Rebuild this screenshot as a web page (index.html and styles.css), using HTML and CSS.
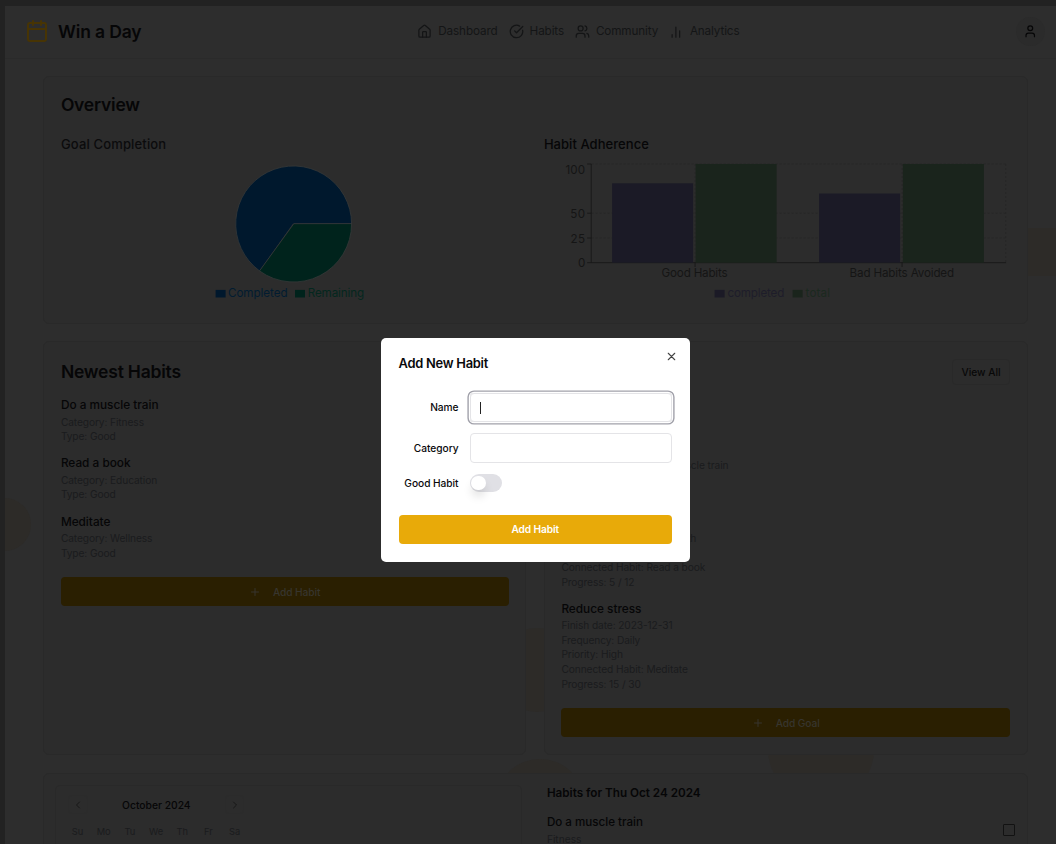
FILE: index.html
```html
<!DOCTYPE html>
<html lang="en">
<head>
<meta charset="utf-8">
<title>Win a Day</title>
<link rel="stylesheet" href="styles.css">
</head>
<body>
<div class="page">
  <div class="bubbles">
    <i class="bubble b1"></i><i class="bubble b2"></i><i class="bubble b3"></i><i class="bubble b4"></i><i class="bubble b5"></i><i class="bubble b6"></i><i class="bubble b7"></i>
  </div>
  <header class="topbar">
    <div class="brand">
      <svg class="logo" viewBox="0 0 24 24"><path d="M8 2v4M16 2v4M3 10h18"/><rect x="3" y="4" width="18" height="18" rx="2"/></svg>
      <span class="brand-name">Win a Day</span>
    </div>
    <nav class="nav">
      <a class="n1"><svg viewBox="0 0 24 24"><path d="M15 21v-8a1 1 0 0 0-1-1h-4a1 1 0 0 0-1 1v8"/><path d="M3 10a2 2 0 0 1 .709-1.528l7-5.999a2 2 0 0 1 2.582 0l7 5.999A2 2 0 0 1 21 10v9a2 2 0 0 1-2 2H5a2 2 0 0 1-2-2z"/></svg><span>Dashboard</span></a>
      <a class="n2"><svg viewBox="0 0 24 24"><path d="M21.801 10A10 10 0 1 1 17 3.335"/><path d="m9 11 3 3L22 4"/></svg><span>Habits</span></a>
      <a class="n3"><svg viewBox="0 0 24 24"><path d="M16 21v-2a4 4 0 0 0-4-4H6a4 4 0 0 0-4 4v2"/><circle cx="9" cy="7" r="4"/><path d="M22 21v-2a4 4 0 0 0-3-3.87M16 3.13a4 4 0 0 1 0 7.75"/></svg><span>Community</span></a>
      <a class="n4"><svg viewBox="0 0 24 24"><path d="M12 20V4M18 20V10M6 20v-4" transform="translate(-1 1)"/></svg><span>Analytics</span></a>
    </nav>
    <div class="avatar"><svg viewBox="0 0 24 24"><path d="M19 21v-2a4 4 0 0 0-4-4H9a4 4 0 0 0-4 4v2"/><circle cx="12" cy="7" r="4"/></svg></div>
  </header>
  <main class="content">
    <section class="card overview">
      <h2>Overview</h2>
      <div class="charts">
        <div>
          <h3 class="goal-h">Goal Completion</h3>
          <svg class="chart" viewBox="0 0 466 145.5">
            <g stroke="#363838" stroke-width=".8">
              <path fill="#00182d" d="M232.6 64H290.6A58 58 0 1 0 198.5 110.9Z"/>
              <path fill="#00231c" d="M232.6 64L198.5 110.9A58 58 0 0 0 290.6 64Z"/>
            </g>
            <rect x="154.6" y="129.9" width="10" height="7.6" fill="#00182d"/>
            <text x="167" y="136.7" textLength="59.5" fill="#021c31">Completed</text>
            <rect x="234" y="129.9" width="10" height="7.6" fill="#00231c"/>
            <text x="246.7" y="136.7" textLength="56.5" fill="#04271e">Remaining</text>
          </svg>
        </div>
        <div>
          <h3 class="adh-h">Habit Adherence</h3>
          <svg class="chart" viewBox="0 0 466 145.5">
            <g transform="translate(-.4 .5)">
            <path class="grid" d="M48 3.5H462.5M48 52.7H462.5M48 77.5H462.5M151.5 3.5V102M358.5 3.5V102M462 3.5V102"/>
            <path class="axis" d="M47.6 3.5V102.2M43.5 3.5H47.6M43.5 52.7H47.6M43.5 77.5H47.6M43.5 102.2H462.5M151.5 102V106.5M358.5 102V106.5"/>
            <rect x="68.5" y="22.8" width="81" height="79.4" fill="#1b1a26"/><rect x="152" y="3.5" width="81" height="98.7" fill="#1a241c"/>
            <rect x="275.5" y="33" width="81" height="69.2" fill="#1b1a26"/><rect x="359.3" y="3.5" width="81" height="98.7" fill="#1a241c"/>
            <g fill="#151515">
              <text x="22" y="13.6" textLength="19.5">100</text><text x="26.7" y="57.4" textLength="14.8">50</text><text x="27" y="82.2" textLength="14.5">25</text><text x="34.3" y="106.9" textLength="7.2">0</text>
              <text x="118" y="116.8" textLength="66">Good Habits</text><text x="306" y="116.8" textLength="104.5">Bad Habits Avoided</text>
            </g>
            <rect x="171" y="129.4" width="10" height="7.6" fill="#1b1a26"/><text x="184" y="136.3" textLength="56.7" fill="#1e1d2a">completed</text>
            <rect x="249" y="129.4" width="10" height="7.6" fill="#1a241c"/><text x="262" y="136.3" textLength="24.5" fill="#1b291f">total</text>
            </g>
          </svg>
        </div>
      </div>
    </section>
    <div class="row">
      <section class="card">
        <div class="card-head"><h2 class="newest">Newest Habits</h2></div>
        <ul class="items">
          <li><h4>Do a muscle train</h4><p>Category: Fitness</p><p>Type: Good</p></li>
          <li><h4>Read a book</h4><p>Category: Education</p><p>Type: Good</p></li>
          <li><h4>Meditate</h4><p>Category: Wellness</p><p>Type: Good</p></li>
        </ul>
        <button class="add dim"><svg viewBox="0 0 24 24"><path d="M5 12h14M12 5v14"/></svg>Add Habit</button>
      </section>
      <section class="card">
        <div class="card-head"><h2 class="newest">Newest Goals</h2><button class="view">View All</button></div>
        <ul class="items">
          <li><h4>Get stronger</h4><p>Finish date: 2023-12-31</p><p>Frequency: Daily</p><p>Priority: High</p><p>Connected Habit: Do a muscle train</p><p>Progress: 10 / 30</p></li>
          <li><h4>Read more</h4><p>Finish date: 2023-12-31</p><p>Frequency: Twice per month</p><p>Priority: Medium</p><p>Connected Habit: Read a book</p><p>Progress: 5 / 12</p></li>
          <li><h4>Reduce stress</h4><p>Finish date: 2023-12-31</p><p>Frequency: Daily</p><p>Priority: High</p><p>Connected Habit: Meditate</p><p>Progress: 15 / 30</p></li>
        </ul>
        <button class="add dim"><svg viewBox="0 0 24 24"><path d="M5 12h14M12 5v14"/></svg>Add Goal</button>
      </section>
    </div>
    <section class="card planner">
      <div class="calendar">
        <div class="month"><span class="arrow"><svg viewBox="0 0 24 24"><path d="m15 18-6-6 6-6"/></svg></span><b>October 2024</b><span class="arrow"><svg viewBox="0 0 24 24"><path d="m9 18 6-6-6-6"/></svg></span></div>
        <div class="days"><span>Su</span><span>Mo</span><span>Tu</span><span>We</span><span>Th</span><span>Fr</span><span>Sa</span></div>
      </div>
      <div class="today">
        <h4>Habits for Thu Oct 24 2024</h4>
        <div class="task"><div><h5>Do a muscle train</h5><p>Fitness</p></div><i class="check"></i></div>
      </div>
    </section>
  </main>
</div>
<div class="modal" role="dialog">
  <svg class="close" viewBox="0 0 24 24"><path d="M18 6 6 18M6 6l12 12"/></svg>
  <h1>Add New Habit</h1>
  <div class="form">
    <label>Name</label><div class="input focus"><i class="caret"></i></div>
    <label>Category</label><div class="input"></div>
    <label>Good Habit</label><div class="switch"><i></i></div>
  </div>
  <button class="add">Add Habit</button>
</div>
</body>
</html>
```
FILE: styles.css
```css
* { box-sizing: border-box; margin: 0; padding: 0; }
body { width: 1056px; height: 844px; overflow: hidden; background: #222; padding: 6px 0 0 5px; font-family: Inter, "Open Sans", sans-serif; color: #060607; }
svg { fill: none; stroke: currentColor; stroke-width: 2; stroke-linecap: round; stroke-linejoin: round; flex: none; }
button { font: inherit; border: 0; }
ul { list-style: none; }
.page { position: relative; height: 838px; background: #2d2d2d; overflow: hidden; }
.bubbles { position: absolute; inset: 0; }
.bubble { position: absolute; border-radius: 50%; background: #2d2b28; }
.b1 { left: -27px; top: 492px; width: 53px; height: 53px; }
.b2 { left: 120px; top: 410px; width: 95px; height: 104px; }
.b3 { left: 995px; top: 222px; width: 90px; height: 48px; border-radius: 0; }
.b4 { left: 490px; top: 622px; width: 84px; height: 84px; }
.b5 { left: 491px; top: 753px; width: 88px; height: 88px; }
.b6 { left: 763px; top: 690px; width: 106px; height: 106px; }
.b7 { left: 794px; top: 490px; width: 90px; height: 90px; }
.topbar { position: relative; height: 52.5px; border-bottom: 1px solid #2a2a2a; display: flex; align-items: center; padding: 0 11px 1px 20px; }
.brand { display: flex; align-items: center; gap: 9px; width: 392.3px; }
.logo { width: 24px; height: 24px; color: #473404; }
.brand-name { font-size: 17.5px; font-weight: 600; letter-spacing: -.13px; }
.nav { display: flex; flex: 1; font-size: 11.7px; letter-spacing: -.12px; color: #141516; }
.nav a { display: flex; align-items: center; gap: 6px; }
.nav svg { width: 15px; height: 15px; }
.n1 { width: 91.3px; } .n2 { width: 66.3px; } .n3 { width: 94px; }
.avatar { width: 29px; height: 29px; border-radius: 50%; background: #2b2b2b; display: grid; place-items: center; }
.avatar svg { width: 14.5px; height: 14.5px; }
.content { position: relative; padding: 17.1px 28px 0 38.2px; display: flex; flex-direction: column; gap: 17.45px; }
.card { border: 1px solid #292929; border-radius: 6px; background: rgba(45,45,45,.87); padding: 16.7px; }
.overview { height: 248.3px; }
h2 { font-size: 17.5px; line-height: 23.3px; font-weight: 600; letter-spacing: -.2px; }
.charts { display: grid; grid-template-columns: 466px 466px; gap: 17px; margin-top: 17.45px; }
h3 { font-size: 13px; line-height: 20.4px; font-weight: 500; margin-bottom: 5.8px; }
.goal-h { letter-spacing: .16px; color: #0b0b0c; }
.adh-h { letter-spacing: .05px; }
.chart { display: block; width: 466px; height: 145.5px; overflow: visible; stroke: none; font-size: 11.64px; }
.grid { stroke: #262626; stroke-width: .8; stroke-dasharray: 2 2; stroke-linecap: butt; }
.axis { stroke: #151515; stroke-width: .8; stroke-linecap: butt; }
.row { display: grid; grid-template-columns: 483px 484px; gap: 17.5px; height: 414px; }
.card-head { display: flex; justify-content: space-between; align-items: center; height: 26.2px; margin-bottom: 12.1px; }
.view { width: 58px; height: 26.2px; border: 1px solid #292929; border-radius: 4px; background: none; font-size: 10.2px; font-weight: 500; color: #080808; }
.items { display: flex; flex-direction: column; gap: 11.64px; margin-bottom: 16.9px; }
.items h4 { font-size: 11.8px; line-height: 17.45px; font-weight: 500; }
.items p { font-size: 10.2px; line-height: 14.55px; letter-spacing: -.1px; color: #1a1b1d; white-space: nowrap; }
.add { display: flex; align-items: center; justify-content: center; width: 100%; height: 29.1px; border-radius: 4px; background: #e8aa09; color: #fff; font-size: 10.2px; font-weight: 600; letter-spacing: -.1px; }
.dim { background: #2a1f01; color: #37352e; font-weight: 500; }
.dim svg { width: 12px; height: 12px; margin-right: 12px; }
.planner { height: 150px; padding: 11.2px; display: grid; grid-template-columns: 467px 1fr; gap: 24.5px; }
.calendar { border: 1px solid #292929; border-radius: 5px; padding: 9px 12px; height: 150px; }
.month { display: flex; justify-content: space-between; align-items: center; width: 176px; height: 19.5px; }
.month b { font-size: 10.3px; font-weight: 500; }
.arrow { width: 19.5px; height: 19.5px; border: 1px solid #2b2b2b; border-radius: 4px; display: grid; place-items: center; color: #171717; }
.arrow svg { width: 12px; height: 12px; }
.days { display: grid; grid-template-columns: repeat(7, 26.2px); margin-top: 10.5px; margin-left: -4px; font-size: 9.3px; line-height: 13px; color: #1a1b1d; text-align: center; }
.today { padding-right: .5px; }
.today h4 { font-size: 11.7px; line-height: 17.5px; font-weight: 600; margin-top: .4px; }
.task { display: flex; justify-content: space-between; align-items: center; margin-top: 11.6px; }
.task h5 { font-size: 11.6px; line-height: 17.5px; font-weight: 500; }
.task p { font-size: 10.2px; line-height: 14.5px; color: #1a1b1d; }
.check { width: 12px; height: 12px; border: 1px solid #121212; border-radius: 1px; }
.modal { position: absolute; left: 380.5px; top: 338px; width: 309.5px; height: 224px; border-radius: 5px; background: #fff; color: #09090b; padding: 16.5px 18px; }
.modal h1 { font-size: 12.9px; line-height: 18px; font-weight: 600; letter-spacing: -.25px; }
.close { position: absolute; right: 12px; top: 12px; width: 13px; height: 13px; color: #444; }
.form { display: grid; grid-template-columns: 60px 202px; column-gap: 11.3px; row-gap: 11.3px; grid-template-rows: 29.3px 29.3px 18px; align-items: center; margin: 20.3px 0 22.9px; }
.form label { font-size: 10.2px; font-weight: 500; letter-spacing: -.05px; text-align: right; white-space: nowrap; }
.input { height: 29.5px; border: 1px solid #e4e4e7; border-radius: 4px; }
.focus { box-shadow: 0 0 0 1.2px #fff, 0 0 0 2.6px #a1a1aa; padding: 8px 9px; }
.caret { display: block; width: 1px; height: 12px; background: #222; }
.switch { width: 32px; height: 17.5px; border-radius: 9px; background: #e0e0e5; padding: 1.5px; }
.switch i { display: block; width: 14.6px; height: 14.6px; border-radius: 50%; background: #fff; box-shadow: 0 7px 9px rgba(0,0,0,.1); }
```
